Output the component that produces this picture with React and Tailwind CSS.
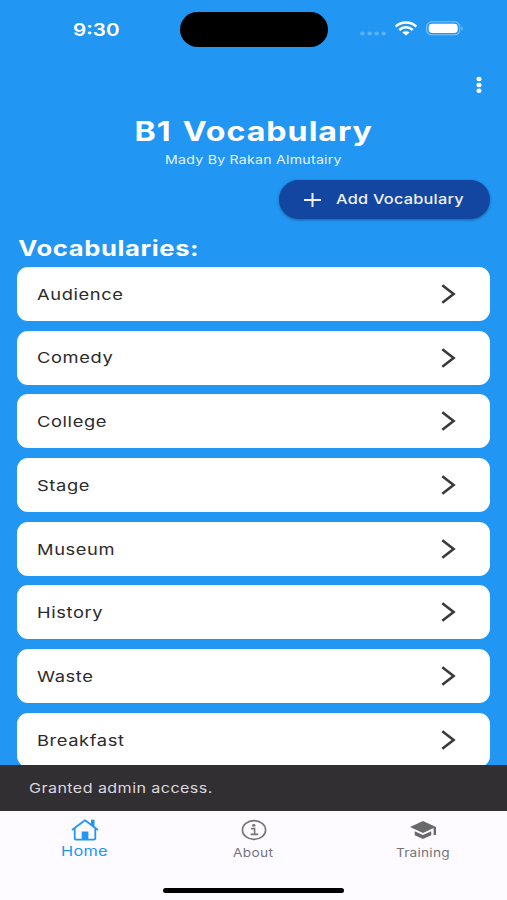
const words = ['Audience', 'Comedy', 'College', 'Stage', 'Museum', 'History', 'Waste', 'Breakfast']

function StatusBar() {
  return (
    <div className="flex h-[59px] shrink-0 text-white">
      <div className="w-[180px] pl-[73px] pt-[18px]">
        <span className="inline-block origin-left scale-x-[1.18] text-[17.5px] leading-6 font-semibold whitespace-nowrap">9:30</span>
      </div>
      <div className="mt-3 h-[35px] w-[148px] rounded-full bg-black" />
      <div className="flex-1 pl-[32px] pt-[19px]">
        <svg width="106" height="20" viewBox="0 0 106 20" fill="none">
          <g fill="#5bb2f8">
            <ellipse cx="2.5" cy="14.5" rx="2.3" ry="1.9" />
            <ellipse cx="9.7" cy="14.5" rx="2.3" ry="1.9" />
            <ellipse cx="16.6" cy="14.5" rx="2.3" ry="1.9" />
            <ellipse cx="23.7" cy="14.5" rx="2.3" ry="1.9" />
          </g>
          <g stroke="#fff" strokeWidth="2.6">
            <path d="M35.7 7.6C41.3 2.2 50.7 2.2 56.3 7.6" />
            <path d="M39.3 11C43.2 7.4 48.8 7.4 52.7 11" />
          </g>
          <path d="M42.3 13.4C44.4 11.7 47.6 11.7 49.7 13.4L46 16.6Z" fill="#fff" />
          <rect x="66.6" y="2.8" width="33.2" height="13" rx="5" stroke="#82c4fa" strokeWidth="1.1" />
          <rect x="68.7" y="4.7" width="29" height="9.3" rx="3.4" fill="#fff" />
          <path d="M101.5 7.2C103.3 8 103.3 10.8 101.5 11.6Z" fill="#82c4fa" />
        </svg>
      </div>
    </div>
  )
}

function WordRow({ word }) {
  return (
    <li className="flex h-[54px] shrink-0 items-center justify-between rounded-[11px] bg-white pl-5 pr-[33px]">
      <span className="mt-[2px] inline-block origin-left scale-x-[1.22] text-[15px] tracking-[0.5px] text-[#2b2a2d]">{word}</span>
      <svg width="17" height="20" viewBox="0 0 17 20" fill="none" stroke="#3b393d" strokeWidth="2.6">
        <path d="M2.3 1.2L13.6 10L2.3 18.8" />
      </svg>
    </li>
  )
}

function HomeIcon() {
  return (
    <svg width="28" height="22" viewBox="0 0 28 22" fill="none" stroke="#2196f3" strokeWidth="1.8">
      <path d="M1 11L14 1.3L27 11" strokeLinejoin="round" />
      <path d="M3.7 9.5V19.3Q3.7 20.6 5.2 20.6H22.8Q24.3 20.6 24.3 19.3V9.5" />
      <path d="M20 0.7H23.5V8.4L20 5.8Z" fill="#2196f3" stroke="none" />
      <path d="M10.7 12.5H17.4V21H10.7Z" fill="#2196f3" stroke="none" />
    </svg>
  )
}

function InfoIcon() {
  return (
    <svg width="26" height="22" viewBox="0 0 26 22" fill="none" stroke="#757477" strokeWidth="1.6">
      <ellipse cx="13" cy="11" rx="11.6" ry="9.4" />
      <ellipse cx="12.8" cy="6.4" rx="1.7" ry="1.4" fill="#757477" stroke="none" />
      <path d="M10 9.6H13.6V15.4M9.6 15.4H17.2" />
    </svg>
  )
}

function TrainingIcon() {
  return (
    <svg width="26" height="18" viewBox="1 3 22 18" preserveAspectRatio="none" fill="#69686b">
      <path d="M5 13.18v4L12 21l7-3.82v-4L12 17l-7-3.82zM12 3L1 9l11 6 9-4.91V17h2V9L12 3z" />
    </svg>
  )
}

export default function App() {
  return (
    <div className="flex h-[900px] w-[507px] flex-col overflow-hidden bg-[#2196f3] font-['Inter',sans-serif]">
      <StatusBar />

      <div className="flex h-[54px] shrink-0 justify-end pr-[24px] pt-[17px]">
        <svg width="8" height="18" viewBox="0 0 8 18" fill="#fff">
          <ellipse cx="4" cy="3" rx="2.6" ry="2.2" />
          <ellipse cx="4" cy="9" rx="2.6" ry="2.2" />
          <ellipse cx="4" cy="14.8" rx="2.6" ry="2.2" />
        </svg>
      </div>

      <header className="flex h-[67px] shrink-0 flex-col items-center text-white">
        <h1 className="scale-x-[1.22] text-[26.4px] leading-9 font-bold tracking-[0.8px] [word-spacing:2px] whitespace-nowrap">B1 Vocabulary</h1>
        <p className="mt-px scale-x-[1.22] text-[11.6px] leading-5 tracking-[0.2px] whitespace-nowrap text-[#e3f2fd]">Mady By Rakan Almutairy</p>
      </header>

      <div className="flex h-[55px] shrink-0 justify-end pr-[17px]">
        <button className="flex h-[39px] w-[211px] items-center rounded-full bg-[#1246a0] pl-[25px] text-[#eef0ff] shadow-[0_1px_3px_rgba(0,0,0,0.35)]">
          <svg width="17" height="14" viewBox="0 0 17 14" stroke="currentColor" strokeWidth="2">
            <path d="M0 7H17M8.5 0V14" />
          </svg>
          <span className="ml-[15px] inline-block origin-left scale-x-[1.2] text-[13.6px] font-medium tracking-[0.2px] whitespace-nowrap">Add Vocabulary</span>
        </button>
      </div>

      <main className="flex h-[530px] shrink-0 flex-col overflow-hidden px-[17px]">
        <h2 className="h-8 shrink-0 origin-left scale-x-[1.22] pl-px pt-px text-[21px] leading-[26px] font-bold tracking-[0.5px] whitespace-nowrap text-white">Vocabularies:</h2>
        <ul className="flex flex-col gap-[9.7px]">
          {words.map((word) => (
            <WordRow key={word} word={word} />
          ))}
        </ul>
      </main>

      <div className="flex h-[46px] shrink-0 items-center bg-[#322f33] pl-[29px]">
        <span className="mt-px inline-block origin-left scale-x-[1.22] text-[13.2px] tracking-[0.35px] whitespace-nowrap text-[#dcd8dd]">Granted admin access.</span>
      </div>

      <nav className="grid h-[72px] shrink-0 grid-cols-3 bg-[#fdfbff] text-[#757477]">
        <div className="flex flex-col items-center pt-2 text-[#2196f3]">
          <HomeIcon />
          <span className="scale-x-[1.2] text-[13.6px] leading-5 tracking-[0.2px]">Home</span>
        </div>
        <div className="flex flex-col items-center pt-2">
          <InfoIcon />
          <span className="mt-[2px] scale-x-[1.18] text-[11.6px] leading-5 tracking-[0.3px]">About</span>
        </div>
        <div className="flex flex-col items-center pt-[10px]">
          <TrainingIcon />
          <span className="mt-1 scale-x-[1.18] text-[11.6px] leading-5 tracking-[0.2px]">Training</span>
        </div>
      </nav>
      <div className="flex flex-1 justify-center bg-[#fdfbff] pt-[4.5px]">
        <div className="h-[5px] w-[181px] rounded-full bg-black" />
      </div>
    </div>
  )
}
